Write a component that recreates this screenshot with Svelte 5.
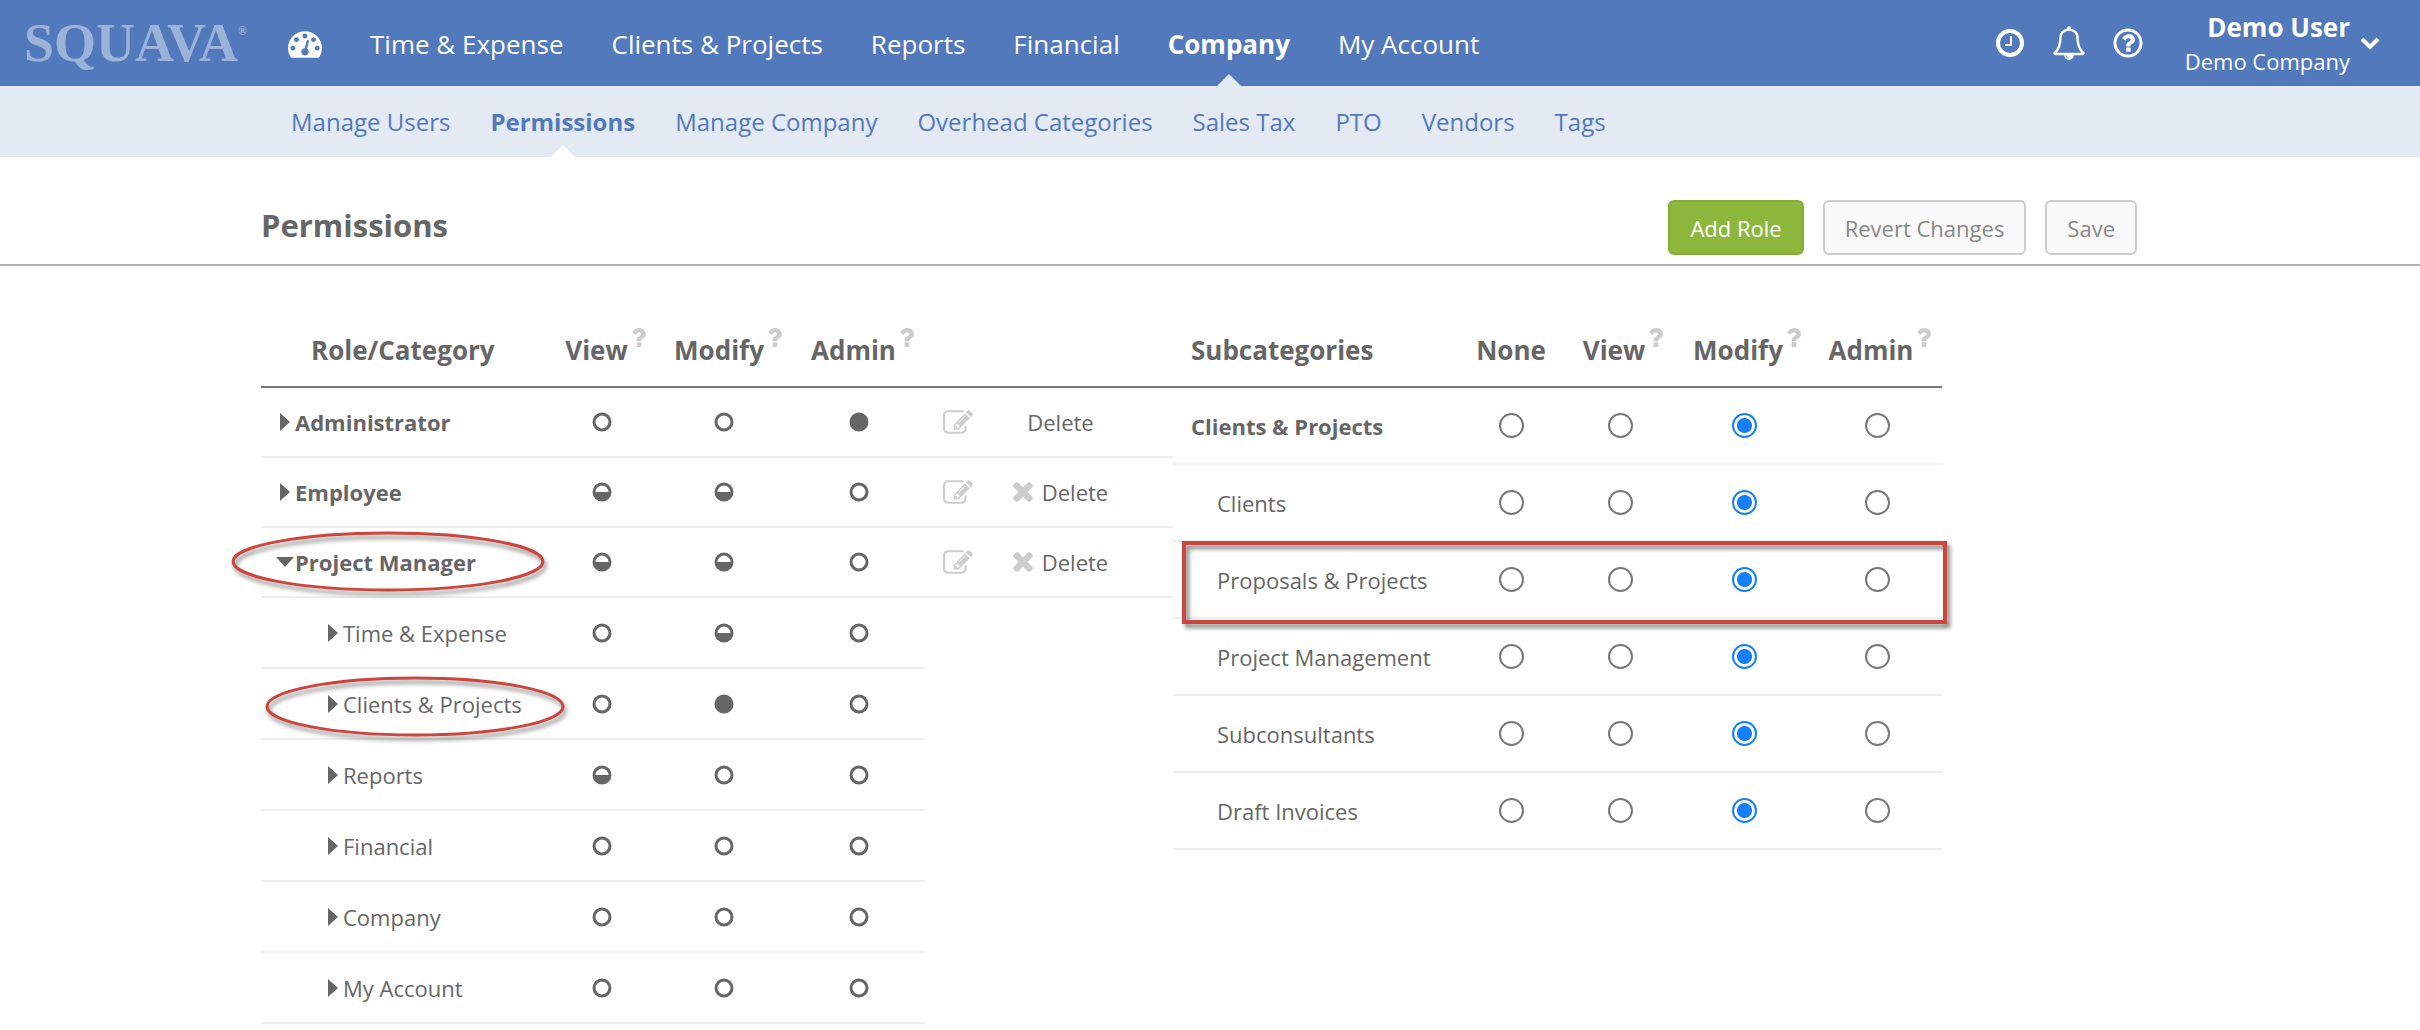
<script>
  const mainNav = ['Time & Expense', 'Clients & Projects', 'Reports', 'Financial', 'Company', 'My Account'];
  const subNav = ['Manage Users', 'Permissions', 'Manage Company', 'Overhead Categories', 'Sales Tax', 'PTO', 'Vendors', 'Tags'];
  const levels = ['View', 'Modify', 'Admin'];

  // Marks: 0 = none, 1 = partial, 2 = full
  const roles = [
    { name: 'Administrator', marks: [0, 0, 2], locked: true },
    { name: 'Employee', marks: [1, 1, 0] },
    {
      name: 'Project Manager',
      marks: [1, 1, 0],
      open: true,
      ringed: true,
      children: [
        { name: 'Time & Expense', marks: [0, 1, 0] },
        { name: 'Clients & Projects', marks: [0, 2, 0], ringed: true },
        { name: 'Reports', marks: [1, 0, 0] },
        { name: 'Financial', marks: [0, 0, 0] },
        { name: 'Company', marks: [0, 0, 0] },
        { name: 'My Account', marks: [0, 0, 0] }
      ]
    }
  ];
  const markNames = ['none', 'partial', 'full'];

  const options = ['None', 'View', 'Modify', 'Admin'];
  let subcategories = $state([
    { name: 'Clients & Projects', level: 'Modify', parent: true },
    { name: 'Clients', level: 'Modify' },
    { name: 'Proposals & Projects', level: 'Modify', boxed: true },
    { name: 'Project Management', level: 'Modify' },
    { name: 'Subconsultants', level: 'Modify' },
    { name: 'Draft Invoices', level: 'Modify' }
  ]);

  const questionPath =
    'M1088 1256v240q0 16-12 28t-28 12h-240q-16 0-28-12t-12-28v-240q0-16 12-28t28-12h240q16 0 28 12t12 28zm316-600q0 54-15.5 101t-35 76.5-55 59.5-57.5 43.5-61 35.5q-41 23-68.5 65t-27.5 67q0 17-12 32.5t-28 15.5h-240q-15 0-25.5-18.5t-10.5-37.5v-45q0-83 65-156.5t143-108.5q59-27 84-56t25-76q0-42-46.5-74t-107.5-32q-65 0-108 29-35 25-107 115-13 16-31 16-12 0-25-8l-164-125q-13-10-15.5-25t5.5-28q160-266 464-266 80 0 161 31t146 83 106 127.5 41 158.5z';
</script>

{#snippet help(label)}
  <button type="button" class="help" aria-label={`About ${label}`}>
    <svg viewBox="387 256 1018 1280" width="15" height="19" aria-hidden="true"><path d={questionPath} /></svg>
  </button>
{/snippet}

{#snippet marks(item)}
  {#each item.marks as mark, i}
    <td class="mark">
      <button type="button" aria-label={`${item.name}: ${levels[i]}, ${markNames[mark]}`}>
        <svg viewBox="0 0 20 20" width="20" height="20" aria-hidden="true">
          <circle cx="10" cy="10" r="8" fill={mark === 2 ? 'currentColor' : 'none'} stroke="currentColor" stroke-width="3" />
          {#if mark === 1}<path d="M1 10h18a9 9 0 0 1-18 0z" fill="currentColor" />{/if}
        </svg>
      </button>
    </td>
  {/each}
{/snippet}

{#snippet ring()}
  <svg class="ring" viewBox="0 0 300 60" preserveAspectRatio="none" aria-hidden="true">
    <ellipse cx="150" cy="30" rx="148" ry="28" vector-effect="non-scaling-stroke" />
  </svg>
{/snippet}

<header class="topbar">
  <a class="logo" href="#home">SQUAVA<sup>®</sup></a>
  <nav class="main-nav" aria-label="Main">
    <a class="gauge" href="#dashboard" aria-label="Dashboard">
      <svg viewBox="0 256 1792 1408" width="34" height="27" aria-hidden="true">
        <path d="M384 1152q0-53-37.5-90.5t-90.5-37.5-90.5 37.5-37.5 90.5 37.5 90.5 90.5 37.5 90.5-37.5 37.5-90.5zm192-448q0-53-37.5-90.5t-90.5-37.5-90.5 37.5-37.5 90.5 37.5 90.5 90.5 37.5 90.5-37.5 37.5-90.5zm428 481l101-382q6-26-7.5-48.5t-38.5-29.5-48 6.5-30 39.5l-101 382q-60 5-107 43.5t-63 98.5q-20 77 20 146t117 89 146-20 89-117q16-60-6-117t-72-91zm660-33q0-53-37.5-90.5t-90.5-37.5-90.5 37.5-37.5 90.5 37.5 90.5 90.5 37.5 90.5-37.5 37.5-90.5zm-640-640q0-53-37.5-90.5t-90.5-37.5-90.5 37.5-37.5 90.5 37.5 90.5 90.5 37.5 90.5-37.5 37.5-90.5zm448 192q0-53-37.5-90.5t-90.5-37.5-90.5 37.5-37.5 90.5 37.5 90.5 90.5 37.5 90.5-37.5 37.5-90.5zm320 448q0 261-141 483-19 29-54 29h-1402q-35 0-54-29-141-221-141-483 0-182 71-348t191-286 286-191 348-71 348 71 286 191 191 286 71 348z" />
      </svg>
    </a>
    {#each mainNav as item}
      <a href="#main" class:active={item === 'Company'} aria-current={item === 'Company' ? 'true' : undefined}>{item}</a>
    {/each}
  </nav>
  <div class="tools">
    <button type="button" aria-label="Timer">
      <svg viewBox="0 0 30 30" width="30" height="30" fill="none" stroke="currentColor" aria-hidden="true">
        <circle cx="15" cy="15" r="12" stroke-width="4" />
        <path d="M16 8v9h-6" stroke-width="2" />
      </svg>
    </button>
    <button type="button" aria-label="Notifications">
      <svg viewBox="64 0 1664 1792" width="32" height="34" aria-hidden="true">
        <path d="M912 1696q0-16-16-16-59 0-101.5-42.5t-42.5-101.5q0-16-16-16t-16 16q0 73 51.5 124.5t124.5 51.5q16 0 16-16zm-666-288h1300q-266-300-266-832 0-51-24-105t-69-103-121.5-80.5-169.5-31.5-169.5 31.5-121.5 80.5-69 103-24 105q0 532-266 832zm1482 0q0 52-38 90t-90 38h-448q0 106-75 181t-181 75-181-75-75-181h-448q-52 0-90-38t-38-90q50-42 91-88t85-119.5 74.5-158.5 50-206 19.5-260q0-152 117-282.5t307-158.5q-8-19-8-39 0-40 28-68t68-28 68 28 28 68q0 20-8 39 190 28 307 158.5t117 282.5q0 139 19.5 260t50 206 74.5 158.5 85 119.5 91 88z" />
      </svg>
    </button>
    <button type="button" aria-label="Help">
      <svg viewBox="0 0 30 30" width="30" height="30" aria-hidden="true">
        <circle cx="15" cy="15" r="13" fill="none" stroke="currentColor" stroke-width="3" />
        <svg x="8" y="6" width="14" height="18" viewBox="387 256 1018 1280"><path d={questionPath} /></svg>
      </svg>
    </button>
    <button type="button" class="account">
      <span class="who"><strong>Demo User</strong><span>Demo Company</span></span>
      <svg viewBox="0 0 20 14" width="20" height="14" fill="none" stroke="currentColor" stroke-width="4" aria-hidden="true"><path d="M2 3l8 8 8-8" /></svg>
    </button>
  </div>
</header>

<nav class="sub-nav" aria-label="Company">
  {#each subNav as item}
    <a href="#sub" class:active={item === 'Permissions'} aria-current={item === 'Permissions' ? 'page' : undefined}>{item}</a>
  {/each}
</nav>

<main>
  <div class="title-row">
    <h1>Permissions</h1>
    <div class="actions">
      <button type="button" class="btn primary">Add Role</button>
      <button type="button" class="btn">Revert Changes</button>
      <button type="button" class="btn">Save</button>
    </div>
  </div>

  <div class="tables">
    <table class="roles">
      <colgroup><col class="c-name" /><col class="c-view" /><col class="c-modify" /><col class="c-admin" /><col class="c-edit" /><col class="c-delete" /></colgroup>
      <thead>
        <tr>
          <th class="first" scope="col">Role/Category</th>
          {#each levels as level}
            <th scope="col">{level}{@render help(level)}</th>
          {/each}
          <td></td>
          <td></td>
        </tr>
      </thead>
      <tbody>
        {#each roles as role}
          <tr>
            <th scope="row">
              <button type="button" class="toggle" aria-expanded={!!role.open}>
                <span class="caret" class:down={role.open}></span>{role.name}
              </button>
              {#if role.ringed}{@render ring()}{/if}
            </th>
            {@render marks(role)}
            <td class="mark edit">
              <button type="button" aria-label={`Edit ${role.name}`}>
                <svg viewBox="0 128 1792 1408" width="30" height="24" aria-hidden="true">
                  <path d="M888 1184l116-116-152-152-116 116v56h96v96h56zm440-720q-16-16-33 1l-350 350q-17 17-1 33t33-1l350-350q17-17 1-33zm80 594v190q0 119-84.5 203.5t-203.5 84.5h-832q-119 0-203.5-84.5t-84.5-203.5v-832q0-119 84.5-203.5t203.5-84.5h832q63 0 117 25 15 7 18 23 3 17-9 29l-49 49q-14 14-32 8-23-6-45-6h-832q-66 0-113 47t-47 113v832q0 66 47 113t113 47h832q66 0 113-47t47-113v-126q0-13 9-22l64-64q15-15 35-7t20 29zm-96-738l288 288-672 672h-288v-288zm444 132l-92 92-288-288 92-92q28-28 68-28t68 28l152 152q28 28 28 68t-28 68z" />
                </svg>
              </button>
            </td>
            <td class="delete">
              <button type="button" disabled={role.locked}>
                {#if !role.locked}
                  <svg viewBox="302 366 1188 1188" width="20" height="20" aria-hidden="true">
                    <path d="M1490 1322q0 40-28 68l-136 136q-28 28-68 28t-68-28l-294-294-294 294q-28 28-68 28t-68-28l-136-136q-28-28-28-68t28-68l294-294-294-294q-28-28-28-68t28-68l136-136q28-28 68-28t68 28l294 294 294-294q28-28 68-28t68 28l136 136q28 28 28 68t-28 68l-294 294 294 294q28 28 28 68z" />
                  </svg>
                {/if}
                Delete
              </button>
            </td>
          </tr>
          {#each role.children ?? [] as child}
            <tr class="child">
              <th scope="row">
                <button type="button" class="toggle" aria-expanded="false"><span class="caret"></span>{child.name}</button>
                {#if child.ringed}{@render ring()}{/if}
              </th>
              {@render marks(child)}
            </tr>
          {/each}
        {/each}
      </tbody>
    </table>

    <table class="subs">
      <colgroup><col class="s-name" /><col class="s-none" /><col class="s-view" /><col class="s-modify" /><col class="s-admin" /></colgroup>
      <thead>
        <tr>
          <th class="first" scope="col">Subcategories</th>
          {#each options as option}
            <th scope="col" class:explained={option !== 'None'}>{option}{#if option !== 'None'}{@render help(option)}{/if}</th>
          {/each}
        </tr>
      </thead>
      <tbody>
        {#each subcategories as sub}
          <tr class:parent={sub.parent} class:boxed={sub.boxed}>
            <th scope="row">{sub.name}{#if sub.boxed}<span class="box"></span>{/if}</th>
            {#each options as option}
              <td class="mark"><input type="radio" name={sub.name + (sub.parent ? ' (all)' : '')} value={option} bind:group={sub.level} aria-label={`${sub.name}: ${option}`} /></td>
            {/each}
          </tr>
        {/each}
      </tbody>
    </table>
  </div>
</main>

<style>
  :global(body) {
    margin: 0;
    background: #fff;
    color: #666;
    font-family: 'Open Sans', 'Noto Sans', sans-serif;
    font-size: 22px;
    line-height: 32px;
  }
  a { color: inherit; text-decoration: none; }
  button { font: inherit; color: inherit; background: none; border: 0; padding: 0; cursor: pointer; }
  svg { display: block; fill: currentColor; }
  svg[fill='none'] { fill: none; }

  .topbar {
    display: flex;
    align-items: center;
    height: 86px;
    padding: 0 40px 0 24px;
    background: #5279bc;
    color: #fff;
  }
  .logo {
    flex: none;
    width: 264px;
    color: #9bb3d9;
    font: 700 54px/60px 'Liberation Serif', serif;
    white-space: nowrap;
  }
  .logo sup { font-size: 12px; line-height: 12px; vertical-align: 26px; }
  .main-nav { display: flex; align-items: center; gap: 48px; font-size: 26px; height: 100%; white-space: nowrap; }
  .main-nav a, .sub-nav a { display: flex; align-items: center; box-sizing: border-box; height: 100%; position: relative; }
  .main-nav a { padding-top: 2px; }
  .main-nav .active, .sub-nav .active { font-weight: 700; }
  .active::after {
    content: '';
    position: absolute;
    left: 50%;
    bottom: 0;
    margin-left: -12px;
    border: 12px solid transparent;
    border-top-width: 0;
    border-bottom-color: #e3eaf4;
  }
  .sub-nav .active::after { border-bottom-color: #fff; }
  .tools { display: flex; align-items: center; gap: 28px; margin-left: auto; }
  .account { display: flex; align-items: center; gap: 10px; margin-left: 14px; }
  .who { display: flex; flex-direction: column; padding-top: 2px; line-height: 34px; text-align: right; }
  .who strong { font-size: 26px; }

  .sub-nav {
    display: flex;
    gap: 40px;
    height: 71px;
    padding-left: 291px;
    background: #e3eaf4;
    color: #5279bc;
    font-size: 24px;
    white-space: nowrap;
  }

  .title-row {
    display: flex;
    align-items: flex-start;
    justify-content: space-between;
    padding: 43px 283px 9px 261px;
    border-bottom: 2px solid #b4b4b4;
  }
  h1 { margin: 0; font-size: 31px; line-height: 50px; font-weight: 700; }
  .actions { display: flex; gap: 19px; }
  .btn {
    height: 55px;
    padding: 0 20px;
    border: 2px solid #ccc;
    border-radius: 6px;
    background: #fafafa;
    color: #888;
  }
  .btn.primary { background: #8db63c; border-color: #86ad38; color: #fff; }

  .tables { display: flex; align-items: flex-start; padding-left: 261px; }
  table { table-layout: fixed; border-collapse: separate; border-spacing: 0; flex: none; }
  .roles { width: 912px; }
  .subs { width: 769px; }
  .c-name { width: 286px; }
  .c-view { width: 109px; }
  .c-modify { width: 136px; }
  .c-admin { width: 133px; }
  .c-edit { width: 66px; }
  .c-delete { width: 182px; }
  .s-name { width: 285px; }
  .s-none { width: 106px; }
  .s-view { width: 112px; }
  .s-modify { width: 136px; }
  .s-admin { width: 130px; }

  th, td { box-sizing: border-box; padding: 0; border-bottom: 2px solid #eee; white-space: nowrap; }
  thead th, thead td {
    height: 122px;
    padding-bottom: 18px;
    border-bottom-color: #777;
    vertical-align: bottom;
    font-size: 26px;
    line-height: 36px;
    font-weight: 700;
    text-align: center;
  }
  .roles thead th { padding-left: 8px; }
  .subs thead .explained { padding-left: 6px; }
  .roles thead .first { text-align: left; padding-left: 50px; }
  .subs thead .first { text-align: left; padding-left: 18px; }
  .help { display: inline-block; vertical-align: 13px; margin-left: 3px; color: #ccc; }

  tbody th { position: relative; text-align: left; font-weight: 700; }
  .roles tbody tr { height: 70px; }
  .roles tbody .child { height: 71px; }
  .child th { font-weight: 400; }
  .toggle { display: flex; align-items: center; padding-left: 14px; }
  .child .toggle { padding-left: 62px; }
  .caret { display: flex; justify-content: center; width: 20px; }
  .caret::before { content: ''; border: 9px solid transparent; border-left: 10px solid #666; border-right: 0; }
  .caret.down::before { border: 9px solid transparent; border-top: 10px solid #666; border-bottom: 0; }
  .mark button { display: block; margin: 0 auto; }
  .edit { color: #ccc; }
  .delete { padding-right: 43px; }
  .delete button { display: flex; align-items: center; gap: 9px; margin: 0 auto; }
  .delete button:disabled { color: inherit; }
  .delete svg { color: #ccc; }

  .subs tbody tr { height: 77px; position: relative; }
  .subs tbody th { position: static; font-weight: 400; padding-left: 44px; }
  .subs .parent th { font-weight: 700; padding-left: 18px; }
  input {
    appearance: none;
    display: block;
    box-sizing: border-box;
    width: 25px;
    height: 25px;
    margin: 0 auto;
    border: 2px solid #777;
    border-radius: 50%;
    background: #fff;
  }
  input:checked { border-color: #157efb; background: radial-gradient(circle, #157efb 7px, #fff 8px); }

  /* Hand-drawn style annotations laid over the tables */
  .ring {
    position: absolute;
    top: 3px;
    left: -30px;
    width: 314px;
    height: 61px;
    overflow: visible;
    pointer-events: none;
    filter: drop-shadow(2px 4px 2px rgba(0, 0, 0, 0.45));
  }
  .child .ring { top: 7px; left: 4px; width: 300px; }
  .ring ellipse { fill: none; stroke: #cc463d; stroke-width: 3px; }
  .box {
    position: absolute;
    inset: -1px -5px -5px 9px;
    border: 4px solid #cc463d;
    pointer-events: none;
    filter: drop-shadow(3px 4px 2px rgba(0, 0, 0, 0.5));
  }
</style>
